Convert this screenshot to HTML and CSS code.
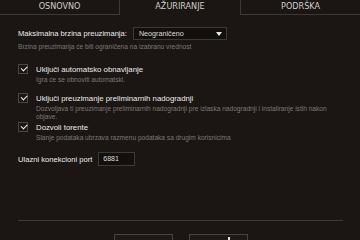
FILE: index.html
```html
<!DOCTYPE html>
<html>
<head>
    <title>Podešavanja</title>
    <link rel="stylesheet" href="styles.css">
</head>
<body>
    <div class="tabs">
        <div class="tab first">OSNOVNO</div>
        <div class="tab active">AŽURIRANJE</div>
        <div class="tab last">PODRŠKA</div>
    </div>
    <div class="content">
        <div class="row">
            <span class="label">Maksimalna brzina preuzimanja:</span>
            <div class="select">
                <span>Neograničeno</span>
                <span class="arrow"></span>
            </div>
        </div>
        <div class="hint">Brzina preuzimanja će biti ograničena na izabranu vrednost</div>

        <div class="option first-option">
            <span class="check"></span>
            <div class="option-text">
                <div class="label">Uključi automatsko obnavljanje</div>
                <div class="hint">Igra će se obnoviti automatski.</div>
            </div>
        </div>

        <div class="option second-option">
            <span class="check"></span>
            <div class="option-text">
                <div class="label">Uključi preuzimanje preliminarnih nadogradnji</div>
                <div class="hint">Dozvoljava ti preuzimanje preliminarnih nadogradnji pre izlaska nadogradnji i instaliranje istih nakon objave.</div>
            </div>
        </div>

        <div class="option">
            <span class="check"></span>
            <div class="option-text">
                <div class="label">Dozvoli torente</div>
                <div class="hint">Slanje podataka ubrzava razmenu podataka sa drugim korisnicima</div>
            </div>
        </div>

        <div class="row port">
            <span class="label">Ulazni konekcioni port</span>
            <div class="input">6881</div>
        </div>
    </div>
    <div class="footer">
        <div class="buttons">
            <div class="button"></div>
            <div class="button"><span class="mark"></span></div>
        </div>
    </div>
</body>
</html>
```

FILE: styles.css
```css
body {
    margin: 0;
    background: #1b1613;
    color: #e4e2e0;
    font-family: "Liberation Sans", Arial, sans-serif;
    width: 360px;
    height: 240px;
    overflow: hidden;
    position: relative;
}

.tabs {
    display: flex;
    height: 15px;
}

.tab {
    box-sizing: border-box;
    width: 120px;
    text-align: center;
    font-family: "DejaVu Sans Condensed", "DejaVu Sans", sans-serif;
    font-size: 9px;
    line-height: 13px;
    color: #cfcdcb;
}

.tab.first {
    border-right: 1px solid #3e3834;
    border-bottom: 1px solid #3e3834;
}

.tab.last {
    border-left: 1px solid #3e3834;
    border-bottom: 1px solid #3e3834;
}

.content {
    padding: 12px 17px 0 18px;
}

.row {
    display: flex;
    align-items: center;
    gap: 6px;
}

.label {
    font-size: 7.6px;
    color: #ecebea;
}

.select {
    box-sizing: border-box;
    width: 94px;
    height: 13px;
    border: 1px solid #3f3935;
    background: #130f0d;
    display: flex;
    align-items: center;
    justify-content: space-between;
    padding: 0 4px 0 5px;
    font-size: 7.2px;
    color: #dddbd9;
}

.arrow {
    width: 0;
    height: 0;
    border-left: 3px solid transparent;
    border-right: 3px solid transparent;
    border-top: 4px solid #e8e8e8;
}

.hint {
    font-size: 6.6px;
    line-height: 8px;
    color: #7d7773;
    margin-top: 3px;
}

.option {
    display: flex;
    gap: 8px;
    margin-top: 2px;
}

.first-option {
    margin-top: 14px;
}

.second-option {
    margin-top: 10px;
}

.check {
    box-sizing: border-box;
    width: 10px;
    height: 10px;
    flex: none;
    border: 1px solid #4a4541;
    position: relative;
    top: -1px;
}

.check::after {
    content: "";
    position: absolute;
    left: 2px;
    top: 1px;
    width: 5px;
    height: 2.5px;
    border-left: 1.3px solid #f2f2f2;
    border-bottom: 1.3px solid #f2f2f2;
    transform: rotate(-45deg);
}

.option-text .label {
    font-size: 7.8px;
    line-height: 9px;
}

.option-text .hint {
    margin-top: 2px;
}

.port {
    margin-top: 10px;
}

.input {
    box-sizing: border-box;
    width: 37px;
    height: 14px;
    border: 1px solid #3f3935;
    background: #130f0d;
    font-size: 7px;
    line-height: 12px;
    padding-left: 4px;
    color: #dddbd9;
}

.footer {
    position: absolute;
    left: 18px;
    right: 17px;
    top: 220px;
    border-top: 1px solid #3f3a37;
}

.buttons {
    display: flex;
    justify-content: center;
    gap: 16px;
    padding-top: 13px;
}

.button {
    box-sizing: border-box;
    width: 59px;
    height: 6px;
    border: 1px solid #48423e;
    border-bottom: none;
    background: #1e1916;
    position: relative;
}

.mark {
    position: absolute;
    left: 38px;
    top: 2px;
    width: 2px;
    height: 4px;
    background: #e0e0e0;
}
```
